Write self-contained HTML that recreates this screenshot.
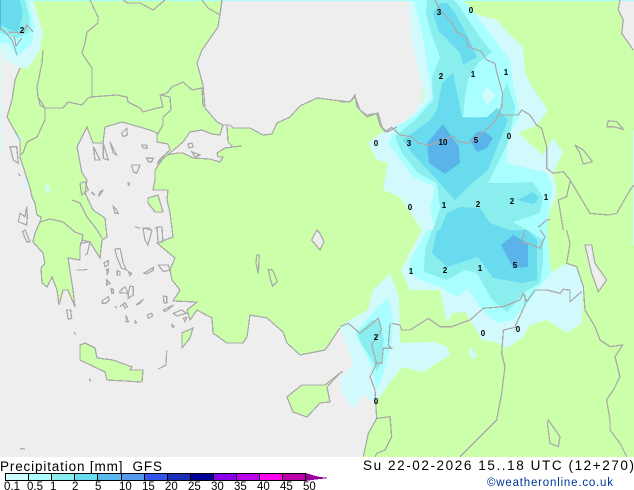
<!DOCTYPE html>
<html>
<head>
<meta charset="utf-8">
<style>
html,body{margin:0;padding:0;background:#fff;width:634px;height:490px;overflow:hidden}
svg{display:block;position:absolute;left:0;top:0}
.l polyline,.l polygon{fill:none;stroke:#a9a9a9;stroke-width:1.25;vector-effect:non-scaling-stroke}
.n text{font:bold 8px "Liberation Sans",sans-serif;fill:#000;text-anchor:middle}
.t{font-family:"Liberation Sans",sans-serif;fill:#000}
</style>
</head>
<body>
<svg width="634" height="490" viewBox="0 0 634 490">
<rect x="0" y="0" width="634" height="457" fill="#eeeeee"/>
<g shape-rendering="crispEdges">
<!-- land -->
<g fill="#ccffaa">
<polygon points="33,0 43,33 40,50 28,68 20,68 15,80 12,100 7,117 20,140 20,157 30,188 32,197 35,203 37,215 41,217 40,222 35,233 33,242 43,253 45,263 41,268 42,283 47,287 52,277 57,290 59,305 63,290 68,290 75,307 73,290 68,258 80,260 80,247 82,240 90,242 100,258 102,240 107,237 105,218 93,210 85,193 87,180 82,173 77,147 87,127 93,143 103,143 105,127 122,122 150,130 157,133 157,142 168,144 170,150 160,159 157,164 162,159 170,153 183,142 190,132 202,130 212,134 220,135 223,125 217,122 205,108 203,85 197,63 202,50 218,27 222,0"/>
<polygon points="227,127 233,128 250,128 263,135 272,134 277,123 290,117 300,106 317,98 333,100 350,102 355,95 357,107 367,117 378,113 382,127 387,132 397,127 420,110 425,60 425,0 620,0 618,10 623,20 622,33 634,50 634,457 363,457 368,433 377,418 375,390 370,377 372,365 365,345 360,333 348,323 340,328 330,343 325,350 300,355 287,343 283,332 267,318 250,315 247,337 243,343 227,343 213,333 212,318 197,310 190,320 187,310 197,302 173,301 180,290 172,280 170,270 175,258 163,248 157,243 173,237 170,213 167,200 168,190 153,190 155,180 155,170 162,160 167,155 178,153 183,153 193,158 210,159 220,162 223,157 218,157 217,153 225,148 233,147 228,142"/>
<polygon points="80,345 80,360 105,372 107,380 142,382 143,370 130,370 132,367 113,360 97,358 95,348 85,343"/>
<polygon points="287,397 293,392 302,385 325,385 340,373 327,387 330,402 320,403 307,417 293,412"/>
<polygon points="193,328 182,333 182,348 190,338"/>
<polygon points="148,198 158,195 163,212 155,212 148,203"/>
</g>
<!-- lakes grey -->
<g fill="#eeeeee">
<polygon points="585,245 592,245 595,263 607,280 598,292 592,273"/>
<polygon points="312,240 317,230 320,233 324,242 320,250"/>
</g>
<!-- pale -->
<g fill="#d2fafc">
<polygon points="0,0 33,0 43,33 40,50 28,68 20,68 5,60 3,50 0,50"/>
<polygon points="408,0 412,43 423,90 423,100 407,120 388,128 368,143 377,160 388,163 383,190 400,197 422,230 401,270 410,290 440,290 447,323 453,313 465,312 482,340 495,342 507,348 523,337 530,325 547,320 567,333 582,323 583,287 577,267 567,263 550,273 547,230 543,230 548,217 557,193 553,173 563,152 553,138 543,155 518,133 537,125 548,110 532,87 525,73 523,47 507,32 497,20 473,13 463,0"/>
<polygon points="390,273 373,290 368,310 350,320 340,327 353,363 340,380 340,387 353,410 363,395 375,403 392,380 402,367 423,372 450,355 447,347 435,342 400,343 399,297"/>
<polygon points="470,347 477,355 472,360 469,352"/>
<polygon points="17,138 20,133 22,140 19,145"/>
<polygon points="25,178 28,187 23,188"/>
<polygon points="48,182 50,192 47,193 45,188"/>
<rect x="0" y="50" width="1" height="103"/>
<rect x="633" y="130" width="1" height="115"/>
</g>
<!-- 0.5 -->
<g fill="#a9ffff">
<polygon points="0,0 28,0 35,27 32,43 17,57 8,43 0,43"/>
<polygon points="414,0 422,33 432,97 418,113 397,127 388,143 413,177 435,187 430,207 435,230 427,230 410,260 408,272 420,280 440,287 457,297 468,288 480,308 497,323 513,320 527,305 537,290 551,273 547,230 550,203 553,187 547,173 507,163 507,140 520,115 513,83 510,60 497,43 467,3 455,0"/>
<polygon points="388,297 375,310 355,333 370,363 377,390 382,378 392,343 393,317"/>
<rect x="0" y="0" width="634" height="1"/>
</g>
<!-- 1 -->
<g fill="#8aeeee">
<polygon points="0,0 25,0 30,20 28,33 17,38 0,33"/>
<polygon points="427,0 426,13 430,30 440,57 432,77 433,100 418,117 395,137 402,153 418,173 437,183 440,208 433,230 432,230 425,250 424,272 447,280 465,270 477,273 492,300 507,312 520,297 523,293 540,283 543,263 543,240 527,230 513,222 540,213 543,197 533,182 507,183 488,183 508,143 515,107 507,82 503,93 500,108 487,117 463,117 465,97 468,80 478,63 492,52 480,37 457,3 453,0"/>
<polygon points="357,333 372,320 379,322 384,340 380,365 377,372 372,360 362,345"/>
</g>
<polygon fill="#d2fafc" points="482,95 487,87 496,95 487,105"/>
<!-- 2 -->
<g fill="#69dbee">
<polygon points="0,0 20,0 23,13 18,33 0,25"/>
<polygon points="440,3 433,13 438,30 460,53 463,65 477,57 468,37 455,13 447,3"/>
<polygon points="453,72 442,83 437,110 430,120 403,140 412,153 437,180 455,200 473,182 488,170 508,120 497,108 487,117 473,118 462,117"/>
<polygon points="437,230 440,230 447,213 460,207 480,208 490,223 510,230 527,230 537,240 537,263 537,280 522,283 493,278 478,257 447,267 432,253"/>
<polygon points="517,200 533,192 539,198 533,204"/>
</g>
<!-- 5 -->
<g fill="#5ab4ea">
<polygon points="443,124 427,143 429,163 445,174 460,163 459,147"/>
<polygon points="477,132 470,140 477,152 487,148 493,138 485,132"/>
<polygon points="513,235 501,245 513,268 528,267 528,243"/>
<rect x="0" y="0" width="1" height="30"/>
</g>
<!-- lines -->
<g class="l">
<!-- Turkey / Asia coast -->
<polyline points="223,125 230,125 233,128 250,128 263,135 272,134 277,123 290,117 300,106 317,98 333,100 350,102 355,95 357,107 367,117 378,113 382,127 387,132 397,127"/>
<polyline points="223,125 227,125 228,142 233,147 242,146 233,147 225,148 217,153 218,157 223,157 220,162 210,159 193,158 183,153 178,153 167,155 162,160 155,170 155,180 153,190 168,190 167,200 170,213 173,237 157,243 163,248 175,258 170,270 172,280 180,290 173,301 197,302 187,310 190,320 197,310 212,318 213,333 227,343 243,343 247,337 250,315 267,318 283,332 287,343 300,355 325,350 330,343 340,328"/>
<polygon points="80,345 80,360 105,372 107,380 142,382 143,370 130,370 132,367 113,360 97,358 95,348 85,343"/>
<polygon points="287,397 293,392 302,385 325,385 340,373 327,387 330,402 320,403 307,417 293,412"/>
<polygon points="193,328 182,333 182,348 190,338"/>
<polygon points="148,198 158,195 163,212 155,212 148,203"/>
<!-- Europe coast -->
<polyline points="20,68 15,80 12,100 7,117 20,140 20,157 30,188 32,197 35,203 37,215 41,217 40,222 35,233 33,242 43,253 45,263 41,268 42,283 47,287 52,277 57,290 59,305 63,290 68,290 75,307 73,290 68,258 80,260 80,247 82,240 90,242 100,258 102,240 107,237 105,218 93,210 85,193 87,180 82,173 77,147 87,127 93,143 103,143 105,127 122,122 150,130 157,133 157,142 168,144 170,150 160,159 157,164 162,159 170,153 183,142 190,132 202,130 212,134 220,135 223,125 217,122 205,108 203,85"/>
<polyline points="203,85 197,63 202,50 218,27 222,0"/>
<polyline points="40,222 50,219 63,222 75,232 83,235 82,240"/>
<polyline points="72,200 80,203 87,217 95,227 102,238"/>
<polyline points="0,28 5,32 12,40 17,55"/>
<polyline points="33,32 27,25 23,33 8,32"/>
<polyline points="14,36 16,46 22,38"/>
<!-- Balkan borders -->
<polyline points="90,0 98,17 98,23 87,32 85,43 82,53 92,68 92,97 88,98 82,105 68,102 63,108 45,108"/>
<polyline points="45,108 38,97 37,87 42,63 43,50"/>
<polyline points="45,108 45,120 37,137 27,142 23,153 20,155"/>
<polyline points="90,97 117,95 127,97 128,102 140,108 143,112 157,108 163,107 160,95 167,93 172,87 183,82 192,90 202,88 203,107"/>
<polyline points="160,95 170,97 171,110 163,117 163,125 157,135"/>
<polyline points="123,0 128,3 140,3 153,10 165,0"/>
<polyline points="202,0 208,8 220,15 222,0"/>
<polyline points="38,97 40,105 45,108"/>
<!-- extra islands -->
<polygon points="188,144 192,143 193,147 189,148"/>
<polygon points="192,152 200,155 195,157"/>
<polygon points="157,227 162,227 163,242 158,242"/>
<polygon points="143,228 152,230 148,245 145,240"/>
</g>
<!-- Zoom-4 coords -->
<g class="l" transform="scale(.33333)">
<polygon points="365,400 380,385 382,405 370,410"/>
<polygon points="425,435 440,435 440,445 430,443"/>
<polygon points="440,475 460,475 455,485 445,485"/>
<polygon points="395,495 420,495 410,520 400,515"/>
<polygon points="384,550 388,550 386,558"/>
<polygon points="275,575 285,585 278,582"/>
<polygon points="300,575 310,570 295,590"/>
<polygon points="340,620 350,630 355,640 345,640"/>
<polygon points="80,620 75,650 60,640 55,665 80,675 82,650"/>
<polygon points="30,440 50,440 55,490 40,480"/>
<polygon points="280,440 300,480 285,480"/>
<polygon points="310,430 325,480 310,475"/>
<polygon points="330,425 350,465 340,460"/>
<polygon points="240,550 255,545 265,570 245,585"/>
<polyline points="430,685 450,685"/>
<polyline points="465,685 480,680"/>
<polyline points="405,680 420,685"/>
<polyline points="55,520 60,528"/>
</g>
<!-- Zoom-5 coords -->
<g class="l" transform="translate(0,230) scale(.33333)">
<polygon points="67,5 80,35 90,35 75,0"/>
<polygon points="345,58 360,55 370,100 380,120 365,115 350,80"/>
<polygon points="312,98 325,92 325,105 315,110"/>
<polygon points="320,118 326,118 322,135"/>
<polygon points="352,122 360,125 360,135 352,135"/>
<polygon points="385,125 395,130 390,137"/>
<polygon points="320,150 330,160 320,165"/>
<polygon points="333,175 340,178 340,190 335,190"/>
<polygon points="358,185 375,170 385,190 390,168 400,170 400,195 385,205 385,190 360,188"/>
<polygon points="432,130 460,112 460,120 440,132"/>
<polygon points="475,105 505,105 510,120 490,125"/>
<polygon points="490,198 500,200 500,218 492,218"/>
<polygon points="307,212 325,200 328,210 318,220 307,220"/>
<polyline points="345,228 350,235"/>
<polygon points="360,230 375,218 382,230 375,235 370,222"/>
<polygon points="408,225 430,208 420,220"/>
<polygon points="378,255 385,275 378,275"/>
<polygon points="405,272 410,278 405,280"/>
<polygon points="442,255 455,250 458,258 445,265"/>
<polygon points="490,240 520,225 505,238 495,245"/>
<polygon points="520,250 545,240 560,250 530,258"/>
<polygon points="550,265 560,262 555,275"/>
<polygon points="515,282 522,290 518,292"/>
<polygon points="200,240 212,240 215,265 205,268"/>
<polyline points="222,305 227,315"/>
<polyline points="500,362 498,405 475,417"/>
<polyline points="268,445 272,455"/>
<polygon points="770,75 778,75 775,130 768,100"/>
<polygon points="805,118 818,120 832,155 818,168 812,150"/>
<polygon points="935,30 950,0 960,10 972,35 960,60"/>
<polyline points="230,120 250,120 262,118"/>
<polyline points="240,40 270,35 262,70 255,75"/>
<polyline points="60,657 68,655 75,658"/>
</g>
<!-- Zoom-2 coords -->
<g class="l" transform="translate(340,0) scale(.33333)">
<polyline points="0,305 30,305 45,290 60,330 80,345 110,340 120,375 135,395 155,382 180,405 215,410 235,430 270,435 310,420 340,408 355,425 385,430 420,405 465,365 485,320 488,280 470,215 465,190 440,180 425,155 385,140 380,115 350,95 330,60 300,30 285,0"/>
<polyline points="475,345 535,345 545,330 570,345 590,375 605,385 620,440 620,505 640,520 670,515 690,540 720,590 750,640 805,645 830,640 870,570 882,555"/>
<polyline points="690,545 680,590 655,600 670,690"/>
<polyline points="840,0 835,30 850,60 845,100 880,150"/>
<polyline points="800,380 805,362 830,365 850,388 820,380 800,380"/>
<polygon points="705,435 730,450 757,485 730,492 720,460"/>
<polyline points="595,682 620,660 632,658"/>
</g>
<!-- Zoom-3 coords -->
<g class="l" transform="translate(340,230) scale(.33333)">
<polyline points="680,0 690,40 680,100 710,110 730,170 735,240 765,290 780,330 810,350 848,345 825,380 840,440 820,480 800,510 810,570 810,600 840,640 860,680"/>
<polyline points="0,290 25,280 60,310 85,290 115,265 125,300 95,345 110,400 90,440 105,480 110,565 85,610 70,680"/>
<polyline points="110,565 150,560 155,620 135,660 110,670 105,680"/>
<polyline points="155,280 180,285 185,300 210,300 265,265 300,290 335,290 390,270 430,235 490,230 540,210 550,190 560,215 585,180 620,180 660,190 670,178 690,180 690,215 725,185"/>
<polyline points="150,280 145,345 155,355 130,355 125,400 105,400"/>
<polyline points="535,290 490,300 485,370 495,410 485,490 470,570 400,640 360,680"/>
<polyline points="555,195 555,225 525,290"/>
<polyline points="555,0 545,35 580,45 600,55 615,20 600,0"/>
<polygon points="625,570 660,620 655,650 630,640 622,580"/>
<polygon points="735,45 755,45 765,100 800,150 775,185 755,130"/>
<polyline points="0,430 8,424"/>
</g>
</g>
<!-- contour labels -->
<g class="n">
<text x="439" y="15">3</text><text x="471" y="13">0</text><text x="22" y="33">2</text>
<text x="441" y="79">2</text><text x="473" y="77">1</text><text x="506" y="75">1</text>
<text x="376" y="146">0</text><text x="409" y="146">3</text><text x="443" y="145">10</text><text x="476" y="143">5</text><text x="509" y="139">0</text>
<text x="410" y="210">0</text><text x="444" y="208">1</text><text x="478" y="207">2</text><text x="512" y="204">2</text><text x="546" y="200">1</text>
<text x="411" y="274">1</text><text x="445" y="273">2</text><text x="480" y="271">1</text><text x="515" y="268">5</text>
<text x="483" y="336">0</text><text x="518" y="332">0</text><text x="376" y="340">2</text><text x="376" y="404">0</text>
</g>
<!-- footer titles -->
<text class="t" x="0" y="471" font-size="13.5" textLength="162" lengthAdjust="spacing" xml:space="preserve">Precipitation [mm]  GFS</text>
<text class="t" x="363" y="470" font-size="13.5" textLength="271" lengthAdjust="spacing" xml:space="preserve">Su 22-02-2026 15..18 UTC (12+270)</text>
<text x="487" y="486" font-family="'Liberation Sans',sans-serif" font-size="11.5" fill="#003399" textLength="126" lengthAdjust="spacing">©weatheronline.co.uk</text>
<!-- legend -->
<g shape-rendering="crispEdges">
<rect x="5" y="473" width="23" height="7" fill="#ccffff"/>
<rect x="28" y="473" width="23" height="7" fill="#aaffff"/>
<rect x="51" y="473" width="23" height="7" fill="#88eeee"/>
<rect x="74" y="473" width="23" height="7" fill="#66ddee"/>
<rect x="97" y="473" width="24" height="7" fill="#55bbee"/>
<rect x="121" y="473" width="23" height="7" fill="#5599ee"/>
<rect x="144" y="473" width="23" height="7" fill="#3355ee"/>
<rect x="167" y="473" width="23" height="7" fill="#1a2fb5"/>
<rect x="190" y="473" width="23" height="7" fill="#000099"/>
<rect x="213" y="473" width="23" height="7" fill="#8800ee"/>
<rect x="236" y="473" width="23" height="7" fill="#bb00ee"/>
<rect x="259" y="473" width="23" height="7" fill="#ff00ee"/>
<rect x="282" y="473" width="23" height="7" fill="#bb00aa"/>
<polygon points="306,473 312,475 320,477 329,478 320,479 312,480 306,481" fill="#990099"/>
<g fill="#000">
<rect x="5" y="473" width="301" height="1"/><rect x="5" y="480" width="301" height="1"/>
<rect x="5" y="473" width="1" height="8"/><rect x="28" y="473" width="1" height="8"/><rect x="51" y="473" width="1" height="8"/><rect x="74" y="473" width="1" height="8"/><rect x="97" y="473" width="1" height="8"/><rect x="121" y="473" width="1" height="8"/><rect x="144" y="473" width="1" height="8"/><rect x="167" y="473" width="1" height="8"/><rect x="190" y="473" width="1" height="8"/><rect x="213" y="473" width="1" height="8"/><rect x="236" y="473" width="1" height="8"/><rect x="259" y="473" width="1" height="8"/><rect x="282" y="473" width="1" height="8"/><rect x="305" y="473" width="1" height="8"/>
</g>
</g>
<g class="t" font-size="11.5">
<text x="4" y="490">0.1</text><text x="27" y="490">0.5</text><text x="50" y="490">1</text><text x="72" y="490">2</text><text x="95" y="490">5</text><text x="119" y="490">10</text><text x="142" y="490">15</text><text x="165" y="490">20</text><text x="188" y="490">25</text><text x="211" y="490">30</text><text x="234" y="490">35</text><text x="257" y="490">40</text><text x="280" y="490">45</text><text x="303" y="490">50</text>
</g>
</svg>
</body>
</html>
